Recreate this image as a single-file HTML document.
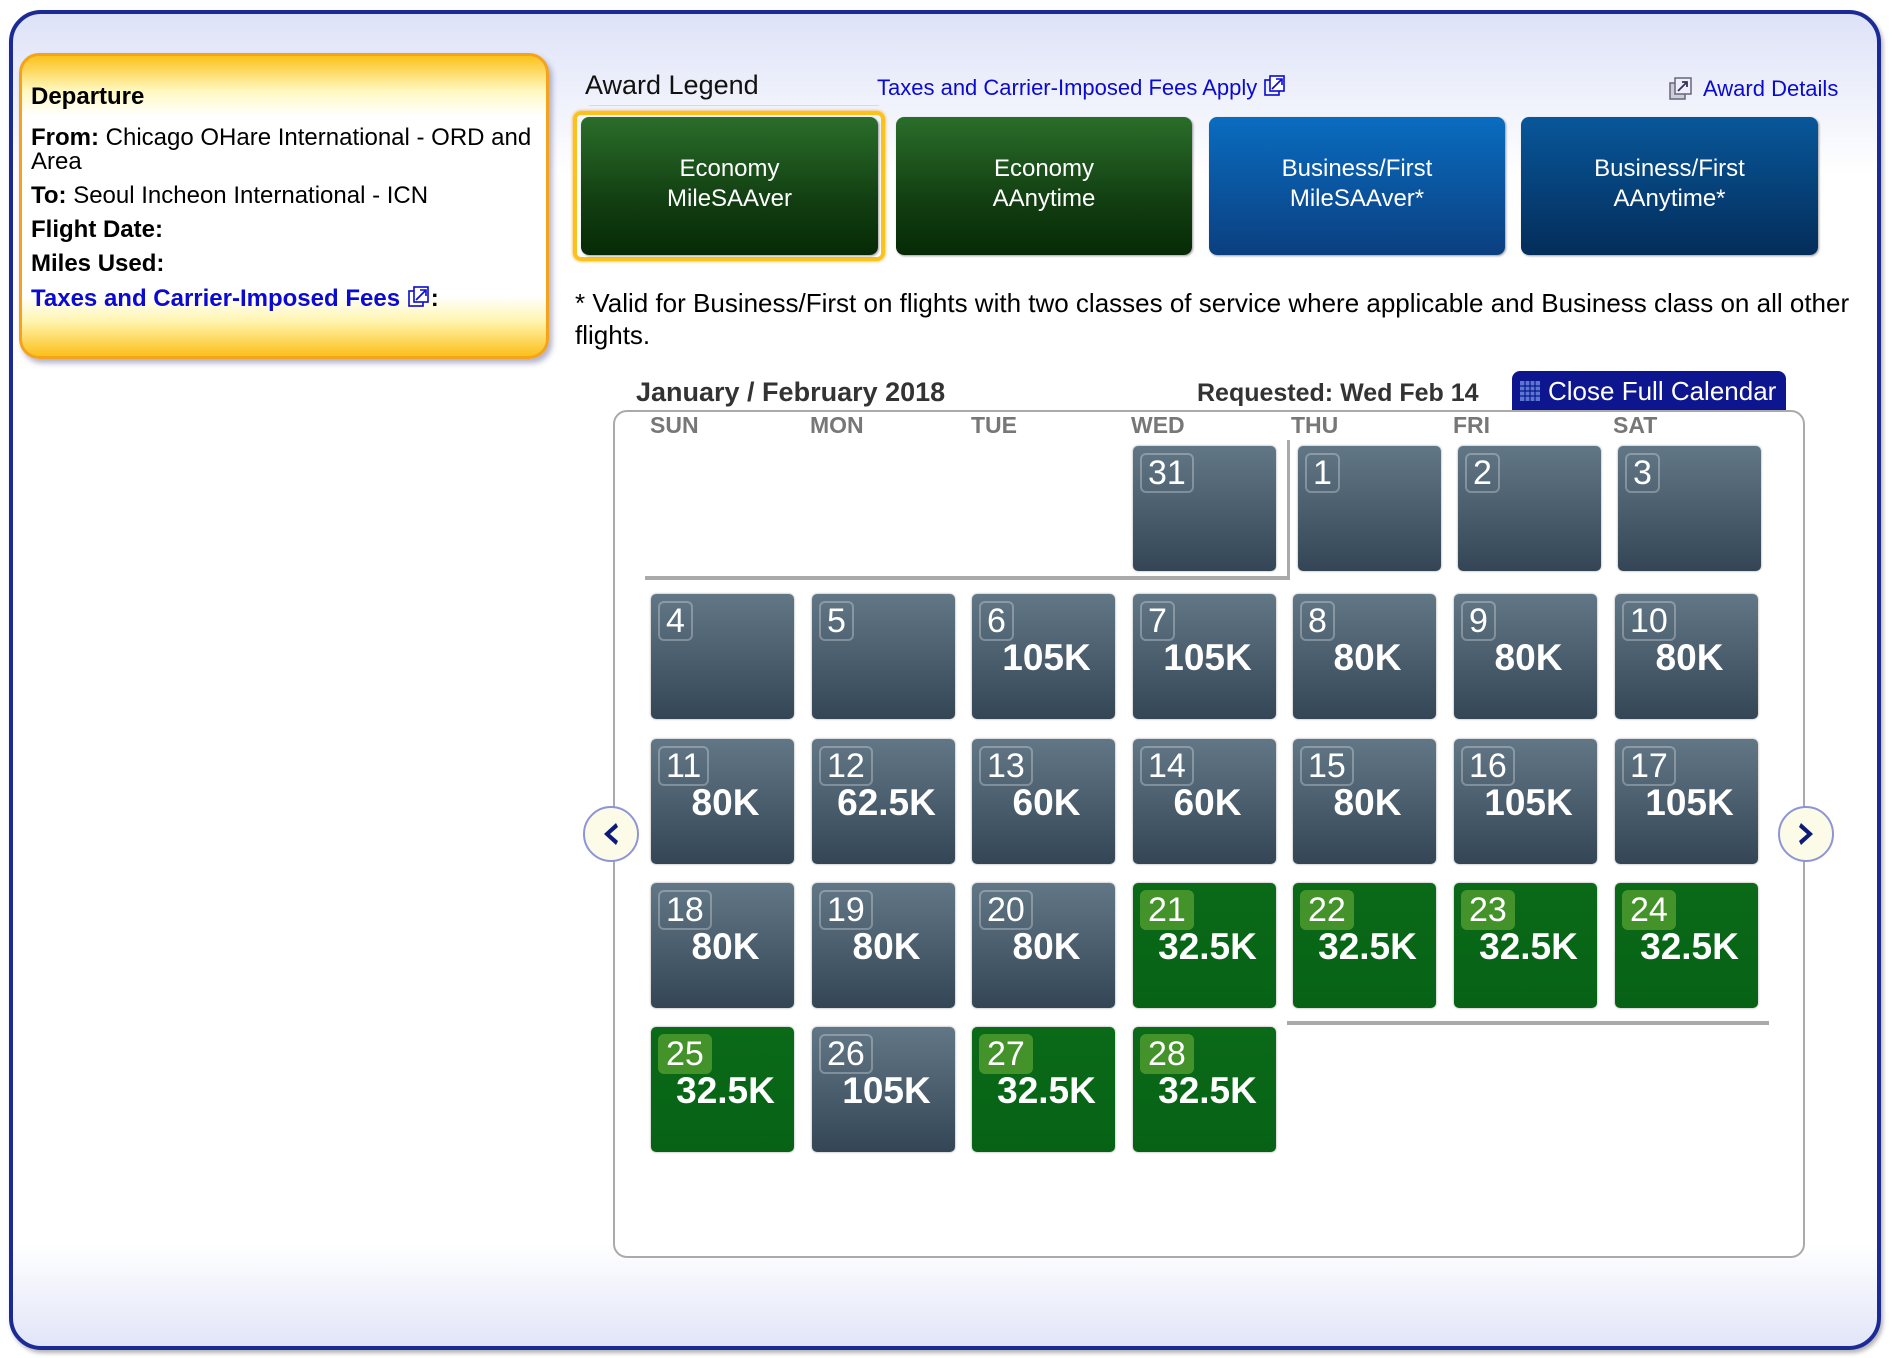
<!DOCTYPE html>
<html><head><meta charset="utf-8"><style>
*{margin:0;padding:0;box-sizing:border-box}
body{width:1894px;height:1358px;background:#fff;position:relative;overflow:hidden;font-family:"Liberation Sans",Arial,sans-serif}
#w{position:absolute;left:0;top:0;width:1894px;height:1358px;transform:translate(-3px,-2px)}
.a{position:absolute}
#frame{left:12px;top:12px;width:1872px;height:1340px;border:4px solid #1c2a96;border-radius:32px;background:linear-gradient(#dde2f7 0,#fff 160px,#fff 1230px,#dfe3f7 1340px);box-shadow:2px 3px 4px rgba(0,0,0,.3)}
#dep{left:22px;top:55px;width:530px;height:306px;border:3px solid #f5a21c;border-radius:20px;background:linear-gradient(#fbc21c 0,#fff8c0 35px,#fff 60px,#fff 240px,#fff5b0 265px,#fbc01a 300px);box-shadow:3px 4px 6px rgba(80,80,140,.45)}
.dt{left:34px;font-size:24px;color:#000;line-height:26px}
.b{font-weight:bold}
.lnk{color:#0a0ad0}
.btn{top:119px;height:138px;border-radius:8px;color:#fff;font-size:24px;text-align:center;line-height:30px;padding-top:37px;box-shadow:1px 1px 2px rgba(0,0,0,.4)}
.g{background:linear-gradient(#2a6e2a,#123f12 60%,#062a06)}
.b1{background:linear-gradient(#0a6cc0,#0b3f80)}
.b2{background:linear-gradient(#08579a,#042d5a)}
.c{width:143px;height:125px;border-radius:5px;background:linear-gradient(#627786,#344656);color:#fff;box-shadow:0 0 2px rgba(0,0,0,.4)}
.c.gr{background:linear-gradient(#0a6a18,#076216)}
.n{position:absolute;left:7px;top:7px;height:40px;padding:0 6px;border:2px solid rgba(255,255,255,.28);border-radius:6px;font-size:34px;line-height:36px}
.gr .n{background:#44932a;border-color:#44932a}
.p{position:absolute;left:0;right:0;top:44px;text-align:center;font-weight:bold;font-size:37px;line-height:40px;padding-left:6px}
.dh{top:414px;font-size:23px;font-weight:bold;color:#777}
.arr{width:56px;height:56px;border-radius:50%;border:2px solid #8e94d8;background:#fbfbe8}
</style></head><body><div id="w">
<div id="frame" class="a"></div>
<div id="dep" class="a"></div>
<div class="a dt b" style="top:86px">Departure</div>
<div class="a dt" style="top:127px"><span class="b">From:</span> Chicago OHare International - ORD and</div>
<div class="a dt" style="top:151px">Area</div>
<div class="a dt" style="top:185px"><span class="b">To:</span> Seoul Incheon International - ICN</div>
<div class="a dt b" style="top:219px">Flight Date:</div>
<div class="a dt b" style="top:253px">Miles Used:</div>
<div class="a dt b" style="top:287px"><span class="lnk">Taxes and Carrier-Imposed Fees <svg width="24" height="24" viewBox="0 0 24 24" style="vertical-align:-3px"><rect x="2" y="6" width="14" height="15" fill="none" stroke="#0a0ad0" stroke-width="1.6"/><rect x="7" y="2" width="14" height="15" fill="#fff" stroke="#0a0ad0" stroke-width="1.6"/><path d="M9 15 L18 6 M13 5h6v6" fill="none" stroke="#0a0ad0" stroke-width="1.6"/></svg></span>:</div>

<div class="a" style="left:588px;top:72px;font-size:27px;color:#111">Award Legend</div>
<div class="a" style="left:592px;top:107px;width:290px;height:1px;background:#cde"></div>
<div class="a lnk" style="left:880px;top:76px;font-size:22px">Taxes and Carrier-Imposed Fees Apply <svg width="24" height="24" viewBox="0 0 24 24" style="vertical-align:-3px"><rect x="2" y="6" width="14" height="15" fill="none" stroke="#0a0ad0" stroke-width="1.6"/><rect x="7" y="2" width="14" height="15" fill="#fff" stroke="#0a0ad0" stroke-width="1.6"/><path d="M9 15 L18 6 M13 5h6v6" fill="none" stroke="#0a0ad0" stroke-width="1.6"/></svg></div>
<div class="a" style="left:1672px;top:79px"><svg width="24" height="24" viewBox="0 0 24 24"><rect x="1" y="6" width="15" height="16" fill="#ccd" stroke="#667" stroke-width="1.5"/><rect x="6" y="1" width="16" height="16" fill="#eef" stroke="#667" stroke-width="1.5"/><path d="M9 14 L18 5 M13 5h5v5" fill="none" stroke="#335" stroke-width="1.8"/></svg></div>
<div class="a lnk" style="left:1706px;top:78px;font-size:22px">Award Details</div>

<div class="a" style="left:576px;top:113px;width:312px;height:150px;border:4px solid #fcc21c;border-radius:8px;box-shadow:0 0 3px #f5a21c"></div>
<div class="a btn g" style="left:584px;width:297px">Economy<br>MileSAAver</div>
<div class="a btn g" style="left:899px;width:296px">Economy<br>AAnytime</div>
<div class="a btn b1" style="left:1212px;width:296px">Business/First<br>MileSAAver*</div>
<div class="a btn b2" style="left:1524px;width:297px">Business/First<br>AAnytime*</div>

<div class="a" style="left:578px;top:289px;font-size:26px;line-height:32px;color:#000;width:1310px">* Valid for Business/First on flights with two classes of service where applicable and Business class on all other flights.</div>

<div class="a b" style="left:639px;top:379px;font-size:27px;color:#333">January / February 2018</div>
<div class="a b" style="left:1200px;top:381px;font-size:25px;color:#333">Requested: Wed Feb 14</div>
<div class="a" style="left:1515px;top:373px;width:274px;height:40px;border-radius:8px 8px 0 0;background:#0d168e;color:#fff;font-size:26px;line-height:40px;padding-left:36px"><svg class="a" style="left:8px;top:10px" width="20" height="20" viewBox="0 0 20 20"><rect x="0" y="0" width="20" height="20" fill="#5a78d0"/><path d="M0 5h20M0 10h20M0 15h20M5 0v20M10 0v20M15 0v20" stroke="#0d168e" stroke-width="1.2"/></svg>Close Full Calendar</div>

<div class="a" style="left:616px;top:412px;width:1192px;height:848px;border:2px solid #aaa;border-radius:14px;background:#fff"></div>
<div class="a dh" style="left:653px">SUN</div>
<div class="a dh" style="left:813px">MON</div>
<div class="a dh" style="left:974px">TUE</div>
<div class="a dh" style="left:1134px">WED</div>
<div class="a dh" style="left:1294px">THU</div>
<div class="a dh" style="left:1456px">FRI</div>
<div class="a dh" style="left:1616px">SAT</div>

<div class="a" style="left:648px;top:578px;width:644px;height:4px;background:#aaa"></div>
<div class="a" style="left:1290px;top:442px;width:3px;height:140px;background:#aaa"></div>
<div class="a" style="left:1290px;top:1023px;width:482px;height:4px;background:#aaa"></div>

<div class="a arr" style="left:586px;top:808px"><svg width="52" height="52" viewBox="0 0 52 52"><path d="M31 15 L19 26 L31 37 L33 33 L25 26 L33 19Z" fill="#0c1a78"/></svg></div>
<div class="a arr" style="left:1781px;top:808px"><svg width="52" height="52" viewBox="0 0 52 52"><path d="M21 15 L33 26 L21 37 L19 33 L27 26 L19 19Z" fill="#0c1a78"/></svg></div>

<div class="a c" style="left:1136px;top:448px"><span class="n">31</span></div>
<div class="a c" style="left:1301px;top:448px"><span class="n">1</span></div>
<div class="a c" style="left:1461px;top:448px"><span class="n">2</span></div>
<div class="a c" style="left:1621px;top:448px"><span class="n">3</span></div>

<div class="a c" style="left:654px;top:596px"><span class="n">4</span></div>
<div class="a c" style="left:815px;top:596px"><span class="n">5</span></div>
<div class="a c" style="left:975px;top:596px"><span class="n">6</span><span class="p">105K</span></div>
<div class="a c" style="left:1136px;top:596px"><span class="n">7</span><span class="p">105K</span></div>
<div class="a c" style="left:1296px;top:596px"><span class="n">8</span><span class="p">80K</span></div>
<div class="a c" style="left:1457px;top:596px"><span class="n">9</span><span class="p">80K</span></div>
<div class="a c" style="left:1618px;top:596px"><span class="n">10</span><span class="p">80K</span></div>

<div class="a c" style="left:654px;top:741px"><span class="n">11</span><span class="p">80K</span></div>
<div class="a c" style="left:815px;top:741px"><span class="n">12</span><span class="p">62.5K</span></div>
<div class="a c" style="left:975px;top:741px"><span class="n">13</span><span class="p">60K</span></div>
<div class="a c" style="left:1136px;top:741px"><span class="n">14</span><span class="p">60K</span></div>
<div class="a c" style="left:1296px;top:741px"><span class="n">15</span><span class="p">80K</span></div>
<div class="a c" style="left:1457px;top:741px"><span class="n">16</span><span class="p">105K</span></div>
<div class="a c" style="left:1618px;top:741px"><span class="n">17</span><span class="p">105K</span></div>

<div class="a c" style="left:654px;top:885px"><span class="n">18</span><span class="p">80K</span></div>
<div class="a c" style="left:815px;top:885px"><span class="n">19</span><span class="p">80K</span></div>
<div class="a c" style="left:975px;top:885px"><span class="n">20</span><span class="p">80K</span></div>
<div class="a c gr" style="left:1136px;top:885px"><span class="n">21</span><span class="p">32.5K</span></div>
<div class="a c gr" style="left:1296px;top:885px"><span class="n">22</span><span class="p">32.5K</span></div>
<div class="a c gr" style="left:1457px;top:885px"><span class="n">23</span><span class="p">32.5K</span></div>
<div class="a c gr" style="left:1618px;top:885px"><span class="n">24</span><span class="p">32.5K</span></div>

<div class="a c gr" style="left:654px;top:1029px"><span class="n">25</span><span class="p">32.5K</span></div>
<div class="a c" style="left:815px;top:1029px"><span class="n">26</span><span class="p">105K</span></div>
<div class="a c gr" style="left:975px;top:1029px"><span class="n">27</span><span class="p">32.5K</span></div>
<div class="a c gr" style="left:1136px;top:1029px"><span class="n">28</span><span class="p">32.5K</span></div>
</div></body></html>
